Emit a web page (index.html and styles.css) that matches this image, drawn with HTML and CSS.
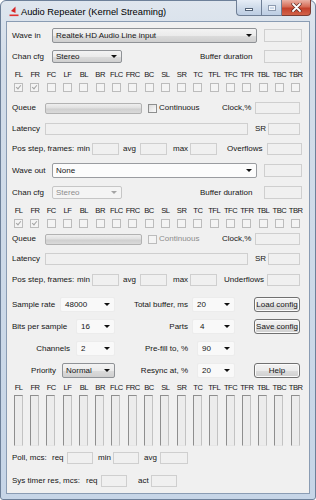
FILE: index.html
```html
<!DOCTYPE html>
<html>
<head>
<meta charset="utf-8">
<title>Audio Repeater</title>
<link rel="stylesheet" href="styles.css">
</head>
<body>
<div class="win">
  <div class="titlebar">
    <svg class="appicon" width="10" height="11" viewBox="0 0 10 11">
      <path d="M6.5 0.5 L6.5 7 L2 5 Z" fill="#d62424"/>
      <rect x="0.5" y="8.5" width="9" height="1.6" fill="#e23030"/>
    </svg>
    <span class="title">Audio Repeater (Kernel Streaming)</span>
    <div class="caption">
      <div class="cbtn cmin"><span class="gmin"></span></div>
      <div class="cbtn cmax"><span class="gmax"></span></div>
      <div class="cbtn cclose">
        <svg width="11" height="9" viewBox="0 0 11 9"><path d="M2 1 L9 8 M9 1 L2 8" stroke="#5a2a22" stroke-width="3.2" stroke-linecap="round"/><path d="M2 1 L9 8 M9 1 L2 8" stroke="#ffffff" stroke-width="1.8" stroke-linecap="round"/></svg>
      </div>
    </div>
  </div>

  <div class="client">
    <!-- input section -->
    <div class="row r-dev mt6">
      <span class="lbl w40">Wave in</span>
      <div class="combo glossy w205"><span class="ctext">Realtek HD Audio Line input</span><i class="arrow"></i></div>
      <div class="edit side ml7"></div>
    </div>
    <div class="row r-cfg mt7">
      <span class="lbl w40">Chan cfg</span>
      <div class="combo glossy w70"><span class="ctext">Stereo</span><i class="arrow"></i></div>
      <span class="lbl ml78 w64">Buffer duration</span>
      <div class="edit side"></div>
    </div>
    <div class="chgrid r-lab mt7">
      <span>FL</span><span>FR</span><span>FC</span><span>LF</span><span>BL</span><span>BR</span><span>FLC</span><span>FRC</span><span>BC</span><span>SL</span><span>SR</span><span>TC</span><span>TFL</span><span>TFC</span><span>TFR</span><span>TBL</span><span>TBC</span><span>TBR</span>
    </div>
    <div class="chgrid r-cb mt3">
      <span class="cb dis on"></span><span class="cb dis on"></span><span class="cb dis"></span><span class="cb dis"></span><span class="cb dis"></span><span class="cb dis"></span><span class="cb dis"></span><span class="cb dis"></span><span class="cb dis"></span><span class="cb dis"></span><span class="cb dis"></span><span class="cb dis"></span><span class="cb dis"></span><span class="cb dis"></span><span class="cb dis"></span><span class="cb dis"></span><span class="cb dis"></span><span class="cb dis"></span>
    </div>
    <div class="row r-12 mt10">
      <span class="lbl w33">Queue</span>
      <div class="progress w97"></div>
      <span class="cb en ml6"></span>
      <span class="lbl ml2 w63">Continuous</span>
      <span class="lbl w33">Clock,%</span>
      <div class="edit w45"></div>
    </div>
    <div class="row r-12 mt9">
      <span class="lbl w33">Latency</span>
      <div class="edit w203"></div>
      <span class="lbl ml7 w13">SR</span>
      <div class="edit w32"></div>
    </div>
    <div class="row r-12 mt8">
      <span class="lbl w65">Pos step, frames:</span>
      <span class="lbl w15">min</span>
      <div class="edit w27"></div>
      <span class="lbl ml4 w17">avg</span>
      <div class="edit w27"></div>
      <span class="lbl ml6 w17">max</span>
      <div class="edit w27"></div>
      <span class="lbl ml10 w40">Overflows</span>
      <div class="edit w35"></div>
    </div>

    <!-- output section -->
    <div class="row r-dev mt8">
      <span class="lbl w40">Wave out</span>
      <div class="combo white w205"><span class="ctext">None</span><i class="arrow"></i></div>
      <div class="edit side ml7"></div>
    </div>
    <div class="row r-cfg mt8">
      <span class="lbl w40">Chan cfg</span>
      <div class="combo disabled w70"><span class="ctext">Stereo</span><i class="arrow"></i></div>
      <span class="lbl ml78 w64">Buffer duration</span>
      <div class="edit side"></div>
    </div>
    <div class="chgrid r-lab mt7">
      <span>FL</span><span>FR</span><span>FC</span><span>LF</span><span>BL</span><span>BR</span><span>FLC</span><span>FRC</span><span>BC</span><span>SL</span><span>SR</span><span>TC</span><span>TFL</span><span>TFC</span><span>TFR</span><span>TBL</span><span>TBC</span><span>TBR</span>
    </div>
    <div class="chgrid r-cb mt3">
      <span class="cb dis on"></span><span class="cb dis on"></span><span class="cb dis"></span><span class="cb dis"></span><span class="cb dis"></span><span class="cb dis"></span><span class="cb dis"></span><span class="cb dis"></span><span class="cb dis"></span><span class="cb dis"></span><span class="cb dis"></span><span class="cb dis"></span><span class="cb dis"></span><span class="cb dis"></span><span class="cb dis"></span><span class="cb dis"></span><span class="cb dis"></span><span class="cb dis"></span>
    </div>
    <div class="row r-12 mt5">
      <span class="lbl w33">Queue</span>
      <div class="progress w97"></div>
      <span class="cb dis ml6"></span>
      <span class="lbl grey ml2 w63">Continuous</span>
      <span class="lbl w33">Clock,%</span>
      <div class="edit w45"></div>
    </div>
    <div class="row r-12 mt8">
      <span class="lbl w33">Latency</span>
      <div class="edit w203"></div>
      <span class="lbl ml7 w13">SR</span>
      <div class="edit w32"></div>
    </div>
    <div class="row r-12 mt9">
      <span class="lbl w65">Pos step, frames:</span>
      <span class="lbl w15">min</span>
      <div class="edit w27"></div>
      <span class="lbl ml4 w17">avg</span>
      <div class="edit w27"></div>
      <span class="lbl ml6 w17">max</span>
      <div class="edit w27"></div>
      <span class="lbl ml7 w43">Underflows</span>
      <div class="edit w33"></div>
    </div>

    <!-- settings -->
    <div class="row r-15 mt11">
      <span class="lbl w48">Sample rate</span>
      <div class="combo plain w55"><span class="ctext">48000</span><i class="arrow"></i></div>
      <span class="lbl rlab w77">Total buffer, ms</span>
      <div class="combo plain w43"><span class="ctext">20</span><i class="arrow"></i></div>
      <div class="btn ml19">Load config</div>
    </div>
    <div class="row r-15 mt7">
      <span class="lbl w64">Bits per sample</span>
      <div class="combo plain w39"><span class="ctext">16</span><i class="arrow"></i></div>
      <span class="lbl rlab w77">Parts</span>
      <div class="combo plain w43"><span class="ctext pad6">4</span><i class="arrow"></i></div>
      <div class="btn ml19">Save config</div>
    </div>
    <div class="row r-15 mt7">
      <span class="lbl llab w64">Channels</span>
      <div class="combo plain w39"><span class="ctext">2</span><i class="arrow"></i></div>
      <span class="lbl rlab w77">Pre-fill to, %</span>
      <div class="combo plain ml5 w38"><span class="ctext">90</span><i class="arrow"></i></div>
    </div>
    <div class="row r-15 mt7">
      <span class="lbl llab w50">Priority</span>
      <div class="combo glossy w53"><span class="ctext">Normal</span><i class="arrow"></i></div>
      <span class="lbl rlab w77">Resync at, %</span>
      <div class="combo plain ml5 w38"><span class="ctext">20</span><i class="arrow"></i></div>
      <div class="btn ml19">Help</div>
    </div>

    <!-- meters -->
    <div class="chgrid r-lab mt5">
      <span>FL</span><span>FR</span><span>FC</span><span>LF</span><span>BL</span><span>BR</span><span>FLC</span><span>FRC</span><span>BC</span><span>SL</span><span>SR</span><span>TC</span><span>TFL</span><span>TFC</span><span>TFR</span><span>TBL</span><span>TBC</span><span>TBR</span>
    </div>
    <div class="chgrid r-meter mt2">
      <span class="meter"></span><span class="meter"></span><span class="meter"></span><span class="meter"></span><span class="meter"></span><span class="meter"></span><span class="meter"></span><span class="meter"></span><span class="meter"></span><span class="meter"></span><span class="meter"></span><span class="meter"></span><span class="meter"></span><span class="meter"></span><span class="meter"></span><span class="meter"></span><span class="meter"></span><span class="meter"></span>
    </div>

    <div class="row r-12 mt6">
      <span class="lbl w40">Poll, mcs:</span>
      <span class="lbl w15">req</span>
      <div class="edit w26"></div>
      <span class="lbl ml5 w15">min</span>
      <div class="edit w26"></div>
      <span class="lbl ml5 w16">avg</span>
      <div class="edit w28"></div>
    </div>
    <div class="row r-12 mt11">
      <span class="lbl w74">Sys timer res, mcs:</span>
      <span class="lbl w15">req</span>
      <div class="edit w26"></div>
      <span class="lbl ml11 w13">act</span>
      <div class="edit w26"></div>
    </div>
  </div>
</div>
</body>
</html>
```

FILE: styles.css
```css
* { box-sizing: border-box; margin: 0; padding: 0; }
html, body { width: 316px; height: 500px; overflow: hidden; background: #ffffff; }
body { font-family: "Liberation Sans", Arial, sans-serif; font-size: 8px; color: #151515; }

.win {
  width: 316px; height: 500px;
  border: 1px solid #6d8099;
  border-radius: 6px 6px 3px 3px;
  background: linear-gradient(#dfe6ee, #d3dde9 60px, #ccd9e8 300px, #c6d5e7);
  padding: 0 5px 5px 5px;
  display: flex; flex-direction: column;
}

/* title bar */
.titlebar { height: 20px; flex: none; display: flex; align-items: center; }
.appicon { margin-left: 3px; margin-top: 1px; flex: none; }
.title { margin-left: 2px; font-size: 9.3px; color: #000; white-space: nowrap; margin-top: 2px; }
.caption { margin-left: auto; margin-right: -1px; align-self: flex-start; margin-top: -1px; display: flex; }
.cbtn { height: 16px; border: 1px solid #6f7f96; border-top: none; display: flex; align-items: center; justify-content: center; }
.cmin { width: 25px; border-radius: 0 0 0 4px; background: linear-gradient(#e6edf6, #cfdbea 50%, #bccde3); border-right: none; }
.cmax { width: 21px; background: linear-gradient(#e6edf6, #cfdbea 50%, #bccde3); }
.cclose { width: 29px; border-radius: 0 0 4px 0; border-color: #7c3c32; border-left: none; background: linear-gradient(#eab2a5, #d66b55 45%, #c3412b 55%, #d26248); }
.gmin { width: 8px; height: 3px; background: #fff; border: 1px solid #556478; margin-top: 4px; }
.gmax { width: 8px; height: 6px; border: 1px solid #8d9bb0; background: transparent; box-shadow: inset 0 0 0 1px #f4f7fb; }

/* client */
.client {
  flex: 1; background: #f0f0f0; border: 1px solid #8a9cb3;
  display: flex; flex-direction: column;
}
.row { display: flex; align-items: center; padding-left: 5px; flex: none; }
.r-dev { height: 15px; }
.r-cfg { height: 13px; }
.r-12 { height: 12px; }
.r-15 { height: 15px; }

.mt2 { margin-top: 2px; } .mt3 { margin-top: 3px; } .mt5 { margin-top: 5px; }
.mt6 { margin-top: 6px; } .mt7 { margin-top: 7px; } .mt8 { margin-top: 8px; }
.mt9 { margin-top: 9px; } .mt10 { margin-top: 10px; } .mt11 { margin-top: 11px; }

.ml2 { margin-left: 2px; } .ml4 { margin-left: 4px; } .ml5 { margin-left: 5px; }
.ml6 { margin-left: 6px; } .ml7 { margin-left: 7px; } .ml10 { margin-left: 10px; }
.ml11 { margin-left: 11px; } .ml19 { margin-left: 19px; } .ml78 { margin-left: 78px; }

.w13 { width: 13px; } .w15 { width: 15px; } .w16 { width: 16px; } .w17 { width: 17px; }
.w26 { width: 26px; } .w27 { width: 27px; } .w28 { width: 28px; } .w32 { width: 32px; }
.w33 { width: 33px; } .w35 { width: 35px; } .w38 { width: 38px; } .w39 { width: 39px; }
.w40 { width: 40px; } .w43 { width: 43px; } .w45 { width: 45px; } .w48 { width: 48px; }
.w50 { width: 50px; } .w53 { width: 53px; } .w55 { width: 55px; } .w63 { width: 63px; }
.w64 { width: 64px; } .w65 { width: 65px; } .w70 { width: 70px; } .w74 { width: 74px; }
.w77 { width: 77px; } .w97 { width: 97px; } .w203 { width: 203px; } .w205 { width: 205px; }

.lbl { white-space: nowrap; flex: none; line-height: 10px; }
.lbl.grey { color: #8c8c8c; }
.rlab { text-align: right; padding-right: 4px; }
.llab { text-align: right; padding-right: 6px; }

/* edits */
.edit { height: 12px; flex: none; border: 1px solid #cfcfcf; background: #f0f0f0; }
.edit.side { width: 38px; height: 13px; }
.r-dev .edit.side { margin-top: -1px; }

/* combos */
.combo { height: 100%; flex: none; display: flex; align-items: center; justify-content: space-between; padding: 0 4px 0 3px; border-radius: 2px; }
.combo.glossy { border: 1px solid #8f9296; background: linear-gradient(#f3f3f3, #ebebeb 50%, #dcdcdc 51%, #cfcfcf); }
.combo.white { border: 1px solid #9a9ca0; background: #fcfcfc; }
.combo.disabled { border: 1px solid #c6c6c6; background: #f4f4f4; color: #8d8d8d; }
.combo.plain { border: 1px solid #ececec; background: #f9f9f9; padding-left: 4px; }
.ctext { white-space: nowrap; line-height: 10px; }
.pad6 { padding-left: 3px; }
.arrow { width: 0; height: 0; border-left: 3px solid transparent; border-right: 3px solid transparent; border-top: 3px solid #111; flex: none; }
.combo.disabled .arrow { border-top-color: #a4a4a4; }

/* progress */
.progress { height: 11px; flex: none; border: 1px solid #b2b2b2; border-radius: 2px; background: linear-gradient(#eeeeee, #e0e0e0 45%, #cfcfcf 55%, #dadada); }

/* checkboxes */
.cb { width: 9px; height: 9px; flex: none; display: block; position: relative; }
.cb.dis { border: 1px solid #bcbcbc; background: #f4f4f4; }
.cb.en { border: 1px solid #8e8f8f; background: linear-gradient(135deg, #dcdcdc, #fbfbfb); }
.cb.on::after { content: ""; position: absolute; left: 2px; top: 0px; width: 2px; height: 4px; border-right: 1px solid #a5a5a5; border-bottom: 1px solid #a5a5a5; transform: rotate(40deg); }

/* channel grids */
.chgrid { display: grid; grid-template-columns: repeat(18, 16.3px); margin-left: 3.5px; flex: none; justify-items: center; align-items: center; }
.r-lab { height: 10px; line-height: 10px; font-size: 7.6px; letter-spacing: -0.5px; }
.r-lab span { white-space: nowrap; }
.r-cb { height: 9px; }
.r-meter { height: 51px; align-items: stretch; }
.meter { width: 9px; display: block; border-top: 1px solid #8e8e8e; border-left: 1px solid #8e8e8e; border-right: 1px solid #c2c2c2; border-bottom: 1px solid #e6e6e6; background: #ececec; margin-left: -1px; }

/* buttons */
.btn { width: 46px; height: 15px; flex: none; border: 1px solid #707070; border-radius: 3px; background: linear-gradient(#f2f2f2, #ebebeb 50%, #dddddd 51%, #cfcfcf); display: flex; align-items: center; justify-content: center; white-space: nowrap; line-height: 10px; box-shadow: inset 0 0 0 1px #fbfbfb; }
```
